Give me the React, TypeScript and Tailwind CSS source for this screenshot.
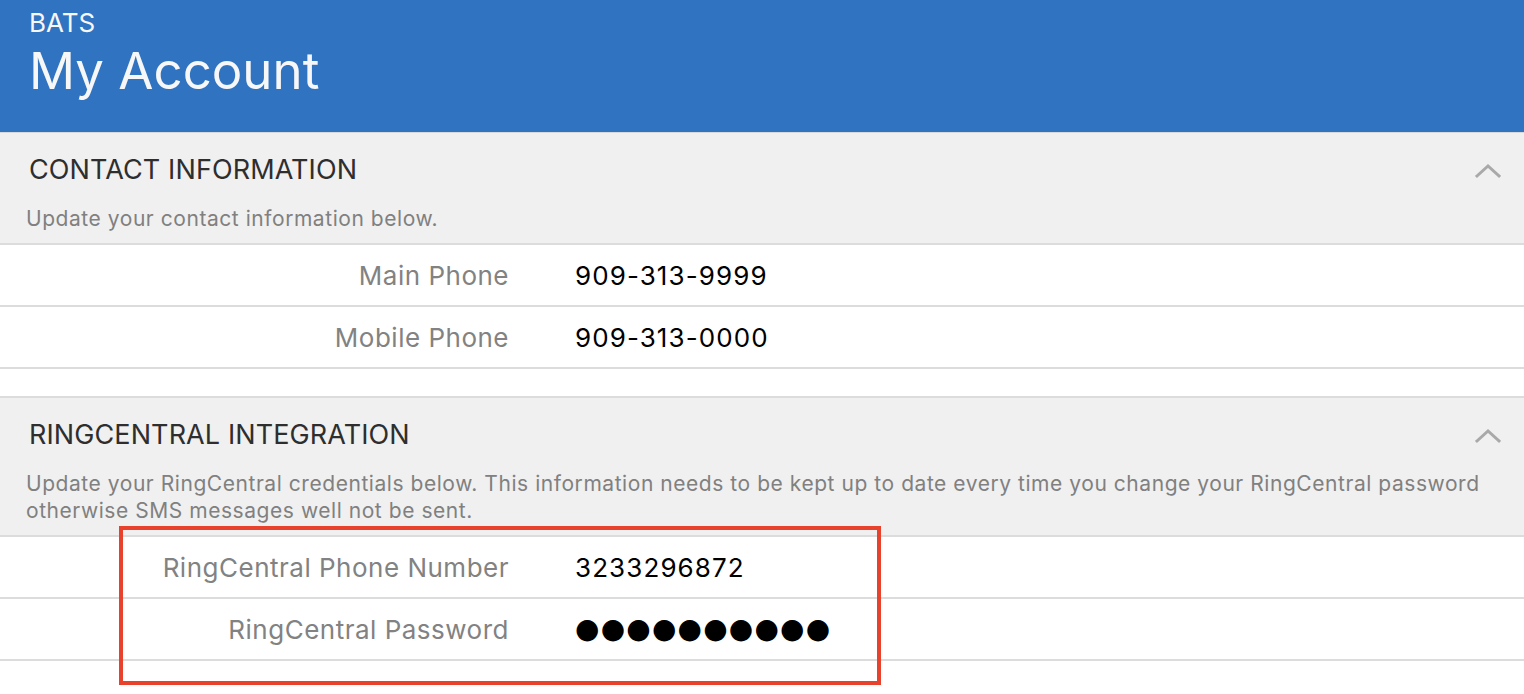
import React from "react";

const Chevron = () => (
  <svg width="26" height="16" viewBox="0 0 26 16" fill="none">
    <path d="M2 13 L13 3 L24 13" stroke="#a9a9a9" strokeWidth="3" strokeLinecap="square" />
  </svg>
);

const SectionHead = ({ title, children }: { title: string; children: React.ReactNode }) => (
  <div className="bg-[#f0f0f0] border-b-2 border-[#dcdcdc] pl-[26px] pr-[23px]">
    <div className="flex items-center justify-between h-[72px] pl-[3px] pt-[3px]">
      <h2 className="text-[27px] text-[#2e2e2e] tracking-[0.1px]">{title}</h2>
      <Chevron />
    </div>
    {children}
  </div>
);

const Row = ({ label, value, pwd }: { label: string; value: string; pwd?: boolean }) => (
  <div className="flex items-center h-[62px] border-b-2 border-[#dcdcdc] bg-white">
    <div className="w-[509px] text-right text-[26px] tracking-[0.5px] text-[#828282]">{label}</div>
    <div
      className={
        pwd
          ? "ml-[66px] text-[28px] text-black tracking-[1.2px] font-['DejaVu_Sans',sans-serif]"
          : "ml-[66px] text-[26px] text-black tracking-[1.1px]"
      }
    >
      {value}
    </div>
  </div>
);

export default function App() {
  return (
    <div className="w-[1524px] h-[694px] overflow-hidden bg-white font-['Inter',sans-serif]">
      <header className="bg-[#2f73c1] h-[133px] px-[29px] pt-[5px] text-[#f7f7f7] border-b border-[#d9d9d9]">
        <div className="text-[26px] leading-[35px]">BATS</div>
        <h1 className="text-[51px] leading-[62px]">My Account</h1>
      </header>

      <SectionHead title="CONTACT INFORMATION">
        <p className="text-[21px] tracking-[0.55px] text-[#808080] leading-[27px] pb-[11px]">
          Update your contact information below.
        </p>
      </SectionHead>
      <Row label="Main Phone" value="909-313-9999" />
      <Row label="Mobile Phone" value="909-313-0000" />
      <div className="h-[29px] border-b-2 border-[#dcdcdc]" />

      <SectionHead title="RINGCENTRAL INTEGRATION">
        <p className="text-[21px] tracking-[0.55px] text-[#808080] leading-[27px] pb-[11px] pr-[20px]">
          Update your RingCentral credentials below. This information needs to be kept up to date every time you change
          your RingCentral password otherwise SMS messages well not be sent.
        </p>
      </SectionHead>
      <div className="relative">
        <Row label="RingCentral Phone Number" value="3233296872" />
        <Row label="RingCentral Password" value="●●●●●●●●●●" pwd />
        <div className="absolute left-[119px] top-[-11px] w-[762px] h-[159px] border-4 border-[#e8412c]" />
      </div>
    </div>
  );
}
